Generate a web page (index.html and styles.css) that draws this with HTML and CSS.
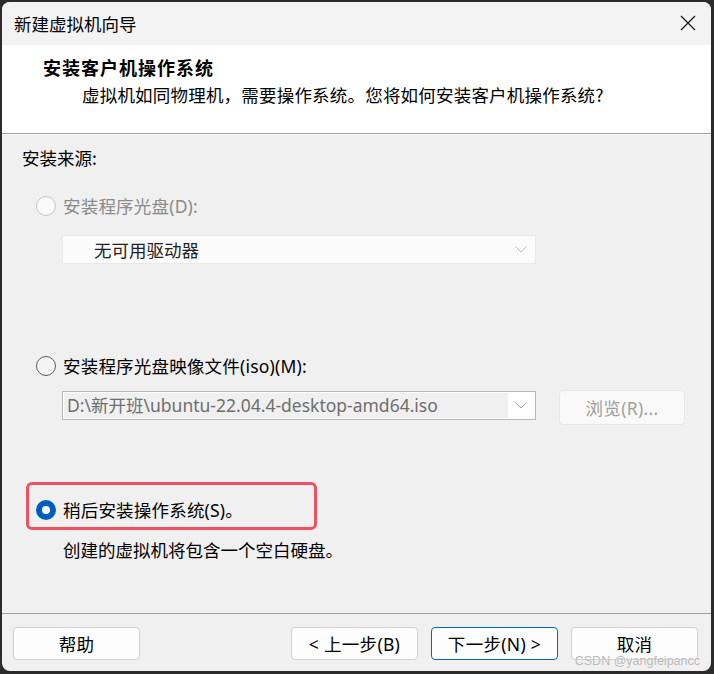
FILE: index.html
```html
<!DOCTYPE html>
<html lang="zh-CN">
<head>
<meta charset="utf-8">
<title>新建虚拟机向导</title>
<link rel="stylesheet" href="styles.css">
</head>
<body>
<div class="window">
  <div class="titlebar">
    <span class="title">新建虚拟机向导</span>
    <span class="close">
      <svg width="16" height="16" viewBox="0 0 16 16"><path d="M1 1 L15 15 M15 1 L1 15" stroke="#1a1a1a" stroke-width="1.3" fill="none"/></svg>
    </span>
  </div>
  <div class="header">
    <div class="h-title">安装客户机操作系统</div>
    <div class="h-sub">虚拟机如同物理机，需要操作系统。您将如何安装客户机操作系统?</div>
  </div>
  <div class="content">
    <div class="section-label">安装来源:</div>
    <div class="radio-row row-disc">
      <span class="radio radio-disabled"></span>
      <span class="label label-disabled">安装程序光盘(D):</span>
    </div>
    <div class="combo combo-disabled">
      <span class="combo-text">无可用驱动器</span>
      <svg class="chev" width="12" height="7" viewBox="0 0 12 7"><path d="M0.5 0.5 L6 6 L11.5 0.5" stroke="#bdbdbd" stroke-width="1" fill="none"/></svg>
    </div>
    <div class="radio-row row-iso">
      <span class="radio"></span>
      <span class="label">安装程序光盘映像文件(iso)(M):</span>
    </div>
    <div class="iso-row">
      <div class="combo combo-iso">
        <span class="iso-field">D:\新开班\ubuntu-22.04.4-desktop-amd64.iso</span>
        <svg class="chev" width="12" height="7" viewBox="0 0 12 7"><path d="M0.5 0.5 L6 6 L11.5 0.5" stroke="#a8a8a8" stroke-width="1" fill="none"/></svg>
      </div>
      <div class="btn btn-disabled">浏览(R)...</div>
    </div>
    <div class="highlight">
      <div class="radio-row">
        <span class="radio radio-checked"></span>
        <span class="label">稍后安装操作系统(S)。</span>
      </div>
    </div>
    <div class="desc">创建的虚拟机将包含一个空白硬盘。</div>
  </div>
  <div class="footer">
    <div class="btn">帮助</div>
    <div class="btn-group">
      <div class="btn">&lt; 上一步(B)</div>
      <div class="btn btn-primary">下一步(N) &gt;</div>
      <div class="btn">取消</div>
    </div>
  </div>
  <div class="watermark">CSDN @yangfeipancc</div>
</div>
</body>
</html>
```
FILE: styles.css
```css
* { box-sizing: border-box; }
html, body { margin: 0; padding: 0; }
body {
  background: #2b2b2b;
  width: 714px;
  height: 674px;
  overflow: hidden;
  font-family: "Noto Sans", "Noto Sans CJK SC", sans-serif;
  color: #000;
}
.window {
  position: relative;
  margin: 2px 0 0 2px;
  width: 709px;
  height: 669px;
  border-radius: 8px;
  overflow: hidden;
  background: #f0f0f0;
  display: flex;
  flex-direction: column;
}
.titlebar {
  height: 43px;
  background: #f3f3f3;
  display: flex;
  align-items: center;
  justify-content: space-between;
  padding: 0 15px 0 12px;
}
.title {
  font-size: 17.5px;
  line-height: 24px;
  font-family: "Noto Sans CJK SC", sans-serif;
}
.close { display: flex; width: 16px; height: 16px; margin-top: -1px; }
.header {
  height: 89px;
  background: #fff;
  border-bottom: 1px solid #a0a0a0;
  padding: 10px 0 0 41px;
}
.h-title {
  font-size: 18px;
  font-weight: 700;
  line-height: 24px;
  letter-spacing: 1px;
  font-family: "Noto Sans CJK SC", sans-serif;
}
.h-sub {
  margin: 4px 0 0 39px;
  font-size: 17.5px;
  line-height: 24px;
  letter-spacing: 0.2px;
  font-family: "Noto Sans CJK SC", sans-serif;
}
.content {
  flex: 1;
  border-top: 1px solid #fbfbfb;
  padding: 11px 0 0 20px;
  font-size: 17.5px;
  line-height: 24px;
}
.section-label { font-family: "Noto Sans CJK SC", sans-serif; }
.radio-row {
  display: flex;
  align-items: center;
  height: 24px;
  margin-left: 14px;
}
.row-disc { margin-top: 24px; }
.row-iso { margin-top: 90px; }
.radio {
  width: 20px;
  height: 20px;
  border-radius: 50%;
  border: 1px solid #5c5c5c;
  background: #f4f4f4;
  flex: none;
  position: relative;
}
.radio-disabled { border-color: #c6c6c6; background: #f9f9f9; }
.radio-checked { border: none; background: #005fb8; }
.radio-checked::after {
  content: "";
  position: absolute;
  left: 6px;
  top: 6px;
  width: 8px;
  height: 8px;
  border-radius: 50%;
  background: #fff;
}
.label { margin-left: 7px; letter-spacing: 0.2px; }
.label-disabled { color: #8a8a8a; }
.combo {
  display: flex;
  align-items: center;
  justify-content: space-between;
  width: 474px;
  height: 29px;
  margin-left: 40px;
}
.combo-disabled {
  margin-top: 17px;
  background: #fbfbfb;
  border: 1px solid #e9e9e9;
  padding: 0 8px 0 31px;
  color: #222;
}
.iso-row {
  display: flex;
  align-items: flex-start;
  margin-top: 12px;
}
.combo-iso {
  margin-top: 1px;
  background: #fff;
  border: 1px solid #b8b8b8;
  padding: 1px 8px 1px 1px;
}
.iso-field {
  align-self: stretch;
  width: 444px;
  background: #f0f0f0;
  color: #6e6e6e;
  padding-left: 3px;
  line-height: 25px;
  white-space: nowrap;
  overflow: hidden;
}
.btn {
  width: 127px;
  height: 33px;
  border: 1px solid #d0d0d0;
  border-radius: 4px;
  background: #fdfdfd;
  display: flex;
  align-items: center;
  justify-content: center;
  font-size: 17.5px;
  line-height: 24px;
  letter-spacing: 0.3px;
}
.btn-disabled {
  width: 126px;
  height: 35px;
  margin-left: 23px;
  background: #f9f9f9;
  border-color: #e6e6e6;
  color: #a0a0a0;
}
.highlight {
  margin: 57px 0 0 4px;
  width: 291px;
  height: 48px;
  border: 3px solid #f0505f;
  border-radius: 6px;
  padding: 13px 0 0 7px;
}
.highlight .radio-row { margin-left: 0; }
.desc { margin: 8px 0 0 41px; }
.footer {
  height: 58px;
  border-top: 1px solid #a0a0a0;
  display: flex;
  justify-content: space-between;
  align-items: flex-start;
  padding: 13px 13px 0 11px;
}
.btn-group { display: flex; gap: 13px; }
.btn-primary { border-color: #0067c0; }
.watermark {
  position: absolute;
  right: 11px;
  bottom: 2px;
  font-size: 12.5px;
  line-height: 16px;
  color: #b8b8b8;
  font-family: "Liberation Sans", sans-serif;
  text-shadow: 0 0 1px #fff;
}
```
